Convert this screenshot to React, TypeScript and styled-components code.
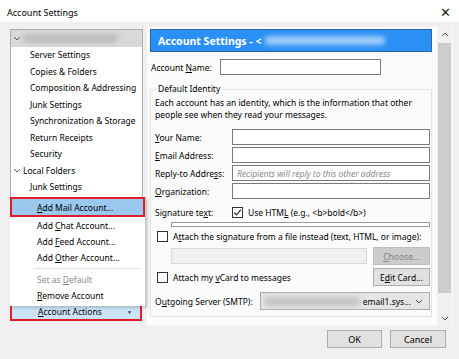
import React from "react";
import styled, { createGlobalStyle } from "styled-components";

const Global = createGlobalStyle`
  html, body { margin: 0; padding: 0; }
  body {
    background: #f0f0f0;
    font-family: "Noto Sans", "Segoe UI", sans-serif;
    font-size: 8.5px;
    color: #000;
  }
  * { box-sizing: border-box; }
`;

const Window = styled.div`
  width: 459px;
  height: 359px;
  display: flex;
  flex-direction: column;
  background: #f0f0f0;
  overflow: hidden;
`;

const TitleBar = styled.div`
  height: 22px;
  flex: none;
  background: #fff;
  display: flex;
  align-items: center;
  justify-content: space-between;
  padding: 2px 8px 0 7px;
  font-size: 9px;
`;

const CloseGlyph = styled.span`
  font-size: 13px;
  color: #222;
  line-height: 1;
`;

const Body = styled.div`
  display: flex;
  padding: 5px 0 0 10px;
  gap: 1px;
  height: 303px;
  flex: none;
`;

const LeftColumn = styled.div`
  width: 136px;
  display: flex;
  flex-direction: column;
  position: relative;
  padding-top: 2px;
`;

const Tree = styled.div`
  width: 133px;
  height: 273px;
  flex: none;
  background: #fff;
  border: 1px solid #adadad;
  border-bottom: none;
  display: flex;
  flex-direction: column;
`;

const TreeRow = styled.div<{ $indent: number; $selected?: boolean }>`
  height: 16.5px;
  flex: none;
  display: flex;
  align-items: center;
  padding-left: ${(p) => p.$indent}px;
  background: ${(p) => (p.$selected ? "#d9d9d9" : "transparent")};
  white-space: nowrap;
  gap: 2px;
`;

const Blur = styled.span<{ $w: number; $c: string }>`
  display: inline-block;
  width: ${(p) => p.$w}px;
  height: 9px;
  background: ${(p) => p.$c};
  filter: blur(2.5px);
  border-radius: 4px;
`;

const Menu = styled.div`
  position: absolute;
  left: 0;
  top: 170px;
  width: 136px;
  background: #fff;
  border-right: 1px solid #c8c8c8;
  box-shadow: 2px 2px 3px rgba(0, 0, 0, 0.18);
  display: flex;
  flex-direction: column;
  padding: 0 0 3px 0;
`;

const MenuItem = styled.div<{ $active?: boolean; $disabled?: boolean }>`
  height: ${(p) => (p.$active ? "20px" : "16.3px")};
  display: flex;
  align-items: center;
  padding-left: ${(p) => (p.$active ? "25px" : "27px")};
  background: ${(p) => (p.$active ? "#99c9ef" : "transparent")};
  border: ${(p) => (p.$active ? "2px solid #e01b2a" : "none")};
  color: ${(p) => (p.$disabled ? "#8d8d8d" : "#000")};
  white-space: nowrap;
`;

const Separator = styled.div`
  height: 1px;
  background: #e0e0e0;
  margin: 2px 4px 2px 24px;
`;

const ActionsButton = styled.div`
  margin-top: 0;
  width: 132px;
  height: 19px;
  background: #cce4f7;
  border: 2px solid #e01b2a;
  display: flex;
  align-items: center;
  justify-content: space-between;
  padding: 0 8px 0 26px;
`;

const SmallArrow = styled.span`
  font-size: 5px;
  color: #333;
`;

const RightPane = styled.div`
  width: 306px;
  display: flex;
  background: #fbfbfb;
`;

const Content = styled.div`
  flex: 1;
  display: flex;
  flex-direction: column;
  padding: 2px 5px 0 3px;
`;

const Header = styled.div`
  height: 23px;
  flex: none;
  background: #2b90f5;
  border: 1px solid #2565ad;
  color: #fff;
  font-weight: 700;
  font-size: 10.5px;
  display: flex;
  align-items: center;
  padding-left: 7px;
  gap: 4px;
`;

const AccountRow = styled.div`
  display: grid;
  grid-template-columns: 69px 161px;
  align-items: center;
  margin-top: 7px;
  padding-left: 1px;
`;

const TextInput = styled.div<{ $w?: number; $disabled?: boolean }>`
  height: 16px;
  width: ${(p) => (p.$w ? `${p.$w}px` : "auto")};
  flex: ${(p) => (p.$w ? "none" : "1")};
  background: ${(p) => (p.$disabled ? "#f0f0f0" : "#fff")};
  border: 1px solid ${(p) => (p.$disabled ? "#d8d8d8" : "#7a7a7a")};
  display: flex;
  align-items: center;
  padding-left: 4px;
  font-style: italic;
  color: #8a8a8a;
`;

const Group = styled.fieldset`
  margin: 8px 0 0 0;
  padding: 0 1px 6px 4px;
  border: 1px solid #e4e4e4;
  display: flex;
  flex-direction: column;
`;

const Legend = styled.legend`
  padding: 0 2px;
  margin-left: 1px;
  line-height: 12px;
`;

const Description = styled.p`
  margin: 2px 0 0 0;
  line-height: 12px;
`;

const FieldGrid = styled.div`
  display: grid;
  grid-template-columns: 77px 1fr;
  row-gap: 2px;
  margin-top: 8px;
  align-items: center;
`;

const SigRow = styled.div`
  display: grid;
  grid-template-columns: 77px 1fr;
  align-items: center;
  margin-top: 7px;
  height: 12px;
`;

const CheckLabel = styled.label`
  display: flex;
  align-items: center;
  gap: 5px;
  white-space: nowrap;
`;

const Box = styled.span`
  width: 11px;
  height: 11px;
  border: 1px solid #333;
  background: #fff;
  display: inline-flex;
  align-items: center;
  justify-content: center;
  flex: none;
`;

const Strip = styled.div`
  height: 5px;
  margin: 4px 0 0 16px;
  border: 1px solid #999;
  background: #fff;
`;

const CheckRow = styled.div`
  margin-top: 3px;
  padding-left: 2px;
  height: 13px;
  display: flex;
  align-items: center;
`;

const FileRow = styled.div<{ $gap?: number }>`
  display: flex;
  align-items: center;
  justify-content: space-between;
  margin-top: ${(p) => p.$gap ?? 4}px;
  height: 18px;
`;

const Button = styled.div<{ $w: number; $disabled?: boolean }>`
  width: ${(p) => p.$w}px;
  height: 18px;
  background: ${(p) => (p.$disabled ? "#cccccc" : "#e1e1e1")};
  border: 1px solid ${(p) => (p.$disabled ? "#bfbfbf" : "#adadad")};
  color: ${(p) => (p.$disabled ? "#838383" : "#000")};
  display: flex;
  align-items: center;
  justify-content: center;
  flex: none;
`;

const SmtpRow = styled.div`
  display: flex;
  align-items: center;
  justify-content: space-between;
  margin-top: 6px;
  height: 18px;
`;

const Select = styled.div`
  width: 170px;
  height: 18px;
  background: #e5e5e5;
  border: 1px solid #adadad;
  display: flex;
  align-items: center;
  padding: 0 6px 0 3px;
  gap: 4px;
`;

const SelectText = styled.span`
  flex: 1;
  display: flex;
  align-items: center;
  justify-content: space-between;
  white-space: nowrap;
`;

const Scrollbar = styled.div`
  width: 15px;
  margin-right: 1px;
  background: #f0f0f0;
  display: flex;
  flex-direction: column;
  align-items: center;
`;

const ArrowGlyph = styled.span`
  height: 14px;
  display: flex;
  align-items: center;
  justify-content: center;
  color: #606060;
`;

const Thumb = styled.div`
  width: 13px;
  height: 250px;
  background: #cdcdcd;
  margin-top: 2px;
`;

const Spacer = styled.div`
  flex: 1;
`;

const Footer = styled.div`
  display: flex;
  justify-content: flex-end;
  gap: 8px;
  padding: 5px 13px 0 0;
`;

const FooterButton = styled(Button)`
  border-color: #adadad;
  font-size: 9px;
`;

const Under = styled.span`
  text-decoration: underline;
  text-underline-offset: 1px;
`;

const Check = () => (
  <svg width="9" height="9" viewBox="0 0 9 9">
    <path d="M1.2 4.6 L3.5 7 L7.8 1.6" fill="none" stroke="#222" strokeWidth="1.1" />
  </svg>
);

const Chev = ({ up }: { up?: boolean }) => (
  <svg width="8" height="5" viewBox="0 0 8 5">
    <path d={up ? "M1 4 L4 1 L7 4" : "M1 1 L4 4 L7 1"} fill="none" stroke="#444" strokeWidth="0.9" />
  </svg>
);

const treeItems = [
  "Server Settings",
  "Copies & Folders",
  "Composition & Addressing",
  "Junk Settings",
  "Synchronization & Storage",
  "Return Receipts",
  "Security",
];

export default function App() {
  return (
    <>
      <Global />
      <Window>
        <TitleBar>
          <span>Account Settings</span>
          <CloseGlyph>✕</CloseGlyph>
        </TitleBar>
        <Body>
          <LeftColumn>
            <Tree>
              <TreeRow $indent={2} $selected>
                <Chev />
                <Blur $w={95} $c="#bdbdbd" />
              </TreeRow>
              {treeItems.map((t) => (
                <TreeRow key={t} $indent={19}>
                  {t}
                </TreeRow>
              ))}
              <TreeRow $indent={2}>
                <Chev />
                <span>Local Folders</span>
              </TreeRow>
              <TreeRow $indent={19}>Junk Settings</TreeRow>
            </Tree>
            <Menu>
              <MenuItem $active>
                <span>
                  <Under>A</Under>dd Mail Account...
                </span>
              </MenuItem>
              <MenuItem>
                <span>
                  Add <Under>C</Under>hat Account...
                </span>
              </MenuItem>
              <MenuItem>
                <span>
                  Add <Under>F</Under>eed Account...
                </span>
              </MenuItem>
              <MenuItem>
                <span>
                  Add <Under>O</Under>ther Account...
                </span>
              </MenuItem>
              <Separator />
              <MenuItem $disabled>
                <span>
                  Set as <Under>D</Under>efault
                </span>
              </MenuItem>
              <MenuItem>
                <span>
                  <Under>R</Under>emove Account
                </span>
              </MenuItem>
            </Menu>
            <ActionsButton>
              <span>
                <Under>A</Under>ccount Actions
              </span>
              <SmallArrow>▼</SmallArrow>
            </ActionsButton>
          </LeftColumn>
          <RightPane>
            <Content>
              <Header>
                <span>Account Settings - &lt;</span>
                <Blur $w={120} $c="rgba(255,255,255,0.55)" />
              </Header>
              <AccountRow>
                <span>
                  Account <Under>N</Under>ame:
                </span>
                <TextInput $w={161} />
              </AccountRow>
              <Group>
                <Legend>Default Identity</Legend>
                <Description>
                  Each account has an identity, which is the information that other
                  <br />
                  people see when they read your messages.
                </Description>
                <FieldGrid>
                  <span>
                    <Under>Y</Under>our Name:
                  </span>
                  <TextInput />
                  <span>
                    <Under>E</Under>mail Address:
                  </span>
                  <TextInput />
                  <span>
                    Reply-to Addre<Under>s</Under>s:
                  </span>
                  <TextInput>Recipients will reply to this other address</TextInput>
                  <span>
                    <Under>O</Under>rganization:
                  </span>
                  <TextInput />
                </FieldGrid>
                <SigRow>
                  <span>
                    Signature te<Under>x</Under>t:
                  </span>
                  <CheckLabel>
                    <Box>
                      <Check />
                    </Box>
                    <span>
                      Use HTM<Under>L</Under> (e.g., &lt;b&gt;bold&lt;/b&gt;)
                    </span>
                  </CheckLabel>
                </SigRow>
                <Strip />
                <CheckRow>
                  <CheckLabel>
                    <Box />
                    <span>
                      A<Under>t</Under>tach the signature from a file instead (text, HTML, or image):
                    </span>
                  </CheckLabel>
                </CheckRow>
                <FileRow $gap={4}>
                  <TextInput $w={196} $disabled style={{ marginLeft: 16 }} />
                  <Button $w={57} $disabled>
                    <span>
                      <Under>C</Under>hoose...
                    </span>
                  </Button>
                </FileRow>
                <FileRow $gap={3}>
                  <CheckLabel style={{ paddingLeft: 2 }}>
                    <Box />
                    <span>
                      Attach my <Under>v</Under>Card to messages
                    </span>
                  </CheckLabel>
                  <Button $w={57}>
                    <span>
                      E<Under>d</Under>it Card...
                    </span>
                  </Button>
                </FileRow>
                <SmtpRow>
                  <span>
                    O<Under>u</Under>tgoing Server (SMTP):
                  </span>
                  <Select>
                    <SelectText>
                      <Blur $w={96} $c="#c2c2c2" />
                      <span>email1.sys...</span>
                    </SelectText>
                    <Chev />
                  </Select>
                </SmtpRow>
              </Group>
            </Content>
            <Scrollbar>
              <ArrowGlyph>
                <Chev up />
              </ArrowGlyph>
              <Thumb />
              <Spacer />
              <ArrowGlyph>
                <Chev />
              </ArrowGlyph>
            </Scrollbar>
          </RightPane>
        </Body>
        <Footer>
          <FooterButton $w={55}>OK</FooterButton>
          <FooterButton $w={56}>Cancel</FooterButton>
        </Footer>
      </Window>
    </>
  );
}
